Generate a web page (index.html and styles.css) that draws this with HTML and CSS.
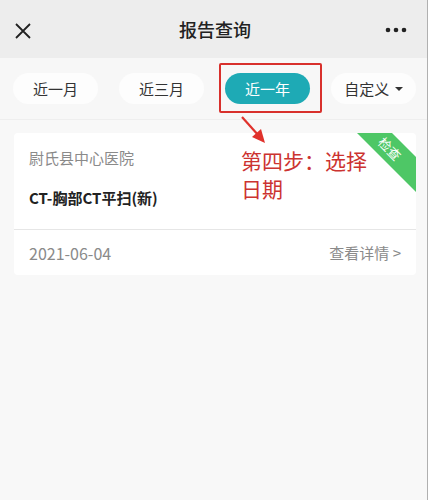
FILE: index.html
```html
<!DOCTYPE html>
<html lang="zh-CN">
<head>
    <meta charset="UTF-8">
    <meta name="viewport" content="width=device-width, initial-scale=1.0">
    <title>报告查询</title>
    <link rel="stylesheet" href="styles.css">
</head>
<body>
    <div class="frame">
        <!-- Kopfzeile -->
        <div class="header">
            <svg class="close" width="16" height="16" viewBox="0 0 16 16">
                <path d="M1 1 L15 15 M15 1 L1 15" stroke="#222" stroke-width="1.8" fill="none"/>
            </svg>
            <div class="title">报告查询</div>
            <svg class="more" width="22" height="6" viewBox="0 0 22 6">
                <circle cx="3" cy="3" r="2.3" fill="#222"/>
                <circle cx="11" cy="3" r="2.3" fill="#222"/>
                <circle cx="19" cy="3" r="2.3" fill="#222"/>
            </svg>
        </div>

        <!-- Zeitraum -->
        <div class="tabs">
            <div class="tab">近一月</div>
            <div class="tab">近三月</div>
            <div class="tab active">近一年</div>
            <div class="tab">自定义 <span class="caret"></span></div>

            <div class="mark"></div>
            <svg class="arrow" width="34" height="34" viewBox="0 0 34 34">
                <path d="M3 1 L20 20" stroke="#e0322c" stroke-width="2.2" fill="none"/>
                <path d="M26 27 L13 21 L22 13 Z" fill="#e0322c"/>
            </svg>
        </div>

        <!-- Liste -->
        <div class="list">
            <div class="card">
                <div class="card-body">
                    <div class="hospital">尉氏县中心医院</div>
                    <div class="item">CT-胸部CT平扫(新)</div>
                </div>
                <div class="card-foot">
                    <span class="date">2021-06-04</span>
                    <span class="detail">查看详情 &gt;</span>
                </div>
                <div class="ribbon"></div>
                <div class="ribbon-text">检查</div>
                <div class="note">第四步：选择日期</div>
            </div>
        </div>
    </div>
</body>
</html>
```

FILE: styles.css
```css
body {
    margin: 0;
    background-color: white;
    font-family: "Noto Sans CJK SC", "Noto Sans", sans-serif;
}

.frame {
    width: 427px;
    height: 500px;
    background-color: #f8f8f8;
    border-right: 1px solid #b0b0b0;
}

.header {
    height: 58px;
    background-color: #ededed;
    display: flex;
    align-items: center;
    justify-content: space-between;
    padding: 0 20px 0 15px;
}

.close {
    margin-top: 3px;
}

.title {
    font-size: 18px;
    font-weight: 500;
    color: #222;
    margin-left: 14px;
}

.more {
    margin-top: 2px;
}

.tabs {
    position: relative;
    z-index: 1;
    height: 62px;
    display: flex;
    align-items: flex-start;
    justify-content: space-between;
    padding: 15px 11px 0 13px;
    box-sizing: border-box;
    background-color: #f7f7f7;
    border-bottom: 1px solid #eeeeee;
}

.tab {
    width: 85px;
    height: 31px;
    line-height: 31px;
    text-align: center;
    border-radius: 16px;
    background-color: #fdfdfd;
    color: #333;
    font-size: 15px;
}

.tab.active {
    background-color: #1eaab5;
    color: white;
}

.caret {
    display: inline-block;
    width: 0;
    height: 0;
    border-left: 4px solid transparent;
    border-right: 4px solid transparent;
    border-top: 4px solid #333;
    vertical-align: middle;
    margin-left: 2px;
    margin-bottom: 3px;
}

.mark {
    position: absolute;
    left: 219px;
    top: 5px;
    width: 99px;
    height: 46px;
    border: 2px solid #d8302c;
    border-radius: 2px;
}

.arrow {
    position: absolute;
    left: 239px;
    top: 58px;
}

.list {
    padding: 13px 11px 0 14px;
}

.card {
    position: relative;
    background-color: white;
    border-radius: 4px;
    overflow: hidden;
}

.card-body {
    height: 97px;
    padding: 14px 15px 0;
    box-sizing: border-box;
    border-bottom: 1px solid #e6e6e6;
}

.hospital {
    font-size: 15px;
    color: #8a8a8a;
    line-height: 22px;
}

.item {
    margin-top: 18px;
    font-size: 15px;
    font-weight: bold;
    color: #222;
    line-height: 22px;
}

.card-foot {
    height: 45px;
    display: flex;
    align-items: center;
    justify-content: space-between;
    padding: 0 15px;
    font-size: 15px;
    color: #8a8a8a;
}

.date {
    font-size: 16px;
}

.ribbon {
    position: absolute;
    top: 0;
    right: 0;
    width: 59px;
    height: 59px;
    background-color: #4ec766;
    clip-path: polygon(0 0, 35px 0, 59px 24px, 59px 59px);
}

.ribbon-text {
    position: absolute;
    top: 6px;
    right: 13px;
    font-size: 13px;
    line-height: 19px;
    color: white;
    transform: rotate(45deg);
}

.note {
    position: absolute;
    left: 227px;
    top: 13px;
    width: 132px;
    font-size: 21px;
    line-height: 28px;
    color: #cc3330;
}
```
